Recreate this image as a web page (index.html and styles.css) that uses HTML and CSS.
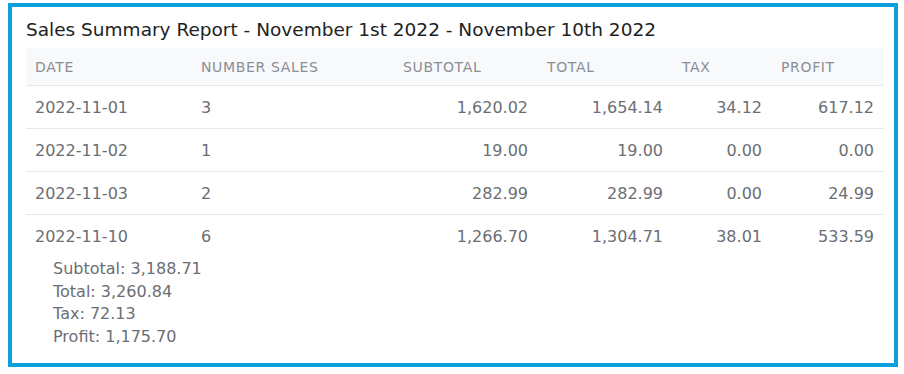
FILE: index.html
```html
<!DOCTYPE html>
<html>
<head>
<meta charset="utf-8">
<link rel="stylesheet" href="styles.css">
</head>
<body>
<div class="frame">
  <h1 class="title">Sales Summary Report - November 1st 2022 - November 10th 2022</h1>
  <table class="report">
    <colgroup>
      <col class="c1"><col class="c2"><col class="c3"><col class="c4"><col class="c5"><col class="c6">
    </colgroup>
    <thead>
      <tr><th>Date</th><th>Number Sales</th><th>Subtotal</th><th>Total</th><th>Tax</th><th>Profit</th></tr>
    </thead>
    <tbody>
      <tr><td>2022-11-01</td><td>3</td><td class="num">1,620.02</td><td class="num">1,654.14</td><td class="num">34.12</td><td class="num">617.12</td></tr>
      <tr><td>2022-11-02</td><td>1</td><td class="num">19.00</td><td class="num">19.00</td><td class="num">0.00</td><td class="num">0.00</td></tr>
      <tr><td>2022-11-03</td><td>2</td><td class="num">282.99</td><td class="num">282.99</td><td class="num">0.00</td><td class="num">24.99</td></tr>
      <tr class="last"><td>2022-11-10</td><td>6</td><td class="num">1,266.70</td><td class="num">1,304.71</td><td class="num">38.01</td><td class="num">533.59</td></tr>
    </tbody>
  </table>
  <div class="summary">
    <div>Subtotal: 3,188.71</div>
    <div>Total: 3,260.84</div>
    <div>Tax: 72.13</div>
    <div>Profit: 1,175.70</div>
  </div>
</div>
</body>
</html>
```
FILE: styles.css
```css
html, body { margin: 0; padding: 0; background: #fff; }
body { font-family: "DejaVu Sans", sans-serif; }
.frame {
  margin: 3px 0 0 8px;
  height: 356px;
  border: 4px solid #0ca0dd;
  padding: 0 0 0 14px;
  box-sizing: content-box;
  width: 868px;
}
.title {
  margin: 0;
  padding-top: 11px;
  height: 30px;
  font-size: 18.5px;
  font-weight: normal;
  color: #222;
  line-height: 24px;
}
.report {
  width: 858px;
  border-collapse: collapse;
  table-layout: fixed;
  font-size: 16px;
  color: #6b6e74;
}
.c1 { width: 166px; } .c2 { width: 202px; } .c3 { width: 144px; }
.c4 { width: 135px; } .c5 { width: 99px; } .c6 { width: 112px; }
.report thead tr { background: #f8f9fa; }
.report th {
  text-align: left;
  font-weight: normal;
  font-size: 14px;
  text-transform: uppercase;
  color: #8a8e95;
  height: 37px;
  padding: 0 0 0 9px;
  border-bottom: 1px solid #e8eaed;
  letter-spacing: 0.65px;
}
.report td {
  height: 42px;
  padding: 0 10px 0 9px;
  border-bottom: 1px solid #e5e7eb;
}
.report tr.last td { border-bottom: none; }
.report td.num { text-align: right; }
.summary {
  padding: 1px 0 0 27px;
  font-size: 16px;
  line-height: 22.7px;
  color: #6b6e74;
}
```
